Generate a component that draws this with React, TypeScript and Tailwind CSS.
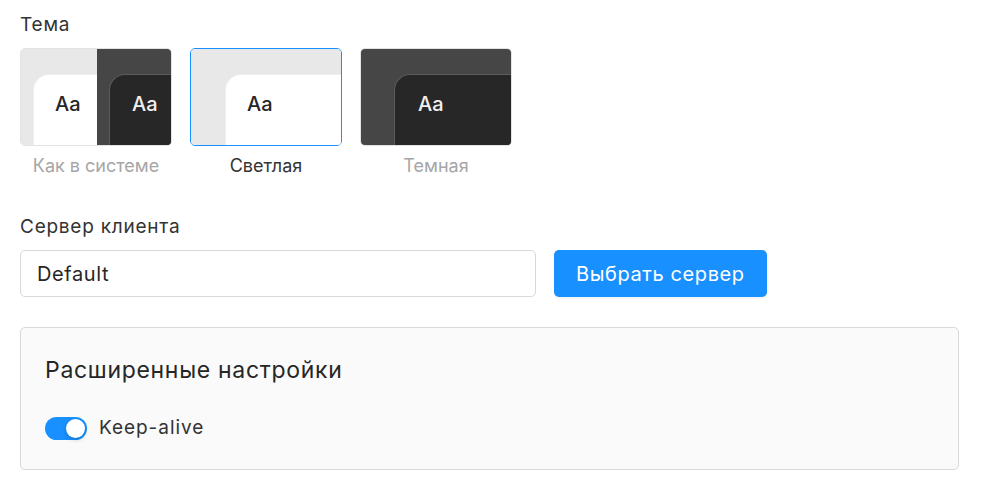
import { useState } from 'react'

type ThemeId = 'system' | 'light' | 'dark'

function LightPreview({ inset }: { inset: string }) {
  return (
    <div className="h-full w-full bg-[#e8e8e8] pt-[25px]">
      <div className={`flex h-full items-start rounded-tl-[16px] border-l border-t border-[#f0f0f0] bg-white pt-[15px] ${inset}`}>
        <span className="text-[20px] leading-[28px] font-medium text-[#262626]">Aa</span>
      </div>
    </div>
  )
}

function DarkPreview({ inset }: { inset: string }) {
  return (
    <div className="h-full w-full bg-[#464646] pt-[25px]">
      <div className={`flex h-full items-start rounded-tl-[16px] border-l border-t border-[#5c5c5c] bg-[#272727] pt-[15px] ${inset}`}>
        <span className="text-[20px] leading-[28px] font-medium text-[#f0f0f0]">Aa</span>
      </div>
    </div>
  )
}

function ThemeCard({ id, label, active, onPick }: { id: ThemeId; label: string; active: boolean; onPick: (id: ThemeId) => void }) {
  return (
    <button type="button" onClick={() => onPick(id)} className="flex w-[152px] flex-col items-center">
      <div
        className={
          active
            ? 'h-[98px] w-full overflow-hidden rounded-[5px] border border-[#1890ff]'
            : 'h-[98px] w-full overflow-hidden rounded-[5px] border border-[#e3e3e3]'
        }
      >
        {id === 'system' ? (
          <div className="flex h-full">
            <div className="w-[76px] shrink-0 overflow-hidden">
              <LightPreview inset="ml-[12px] pl-[21px]" />
            </div>
            <div className="flex-1 overflow-hidden">
              <DarkPreview inset="ml-[12px] pl-[22px]" />
            </div>
          </div>
        ) : id === 'light' ? (
          <LightPreview inset="ml-[34px] pl-[21px]" />
        ) : (
          <DarkPreview inset="ml-[33px] pl-[23px]" />
        )}
      </div>
      <span className={active ? 'mt-[6px] text-[18px] text-[#333]' : 'mt-[6px] text-[18px] text-[#a6a6a6]'}>{label}</span>
    </button>
  )
}

export default function App() {
  const [theme, setTheme] = useState<ThemeId>('light')
  const [keepAlive, setKeepAlive] = useState(true)

  return (
    <div className="min-h-[501px] bg-white px-[20px] pt-[12px] text-[#333] [font-family:Inter,'Noto_Sans',sans-serif]">
      <div className="text-[19px] leading-[26px] tracking-[0.04em]">Тема</div>
      <div className="mt-[10px] flex gap-[18px]">
        <ThemeCard id="system" label="Как в системе" active={theme === 'system'} onPick={setTheme} />
        <ThemeCard id="light" label="Светлая" active={theme === 'light'} onPick={setTheme} />
        <ThemeCard id="dark" label="Темная" active={theme === 'dark'} onPick={setTheme} />
      </div>

      <div className="mt-[35px] text-[19px] leading-[26px] tracking-[0.04em]">Сервер клиента</div>
      <div className="mt-[10px] flex items-center gap-[18px]">
        <div className="flex h-[47px] w-[516px] items-center rounded-[5px] border border-[#d9d9d9] px-[16px] text-[20px] tracking-[0.03em] text-[#262626]">
          Default
        </div>
        <button
          type="button"
          className="h-[47px] rounded-[5px] bg-[#1890ff] px-[22px] text-[20px] tracking-[0.03em] text-white shadow-[0_2px_0_rgba(0,0,0,0.04)]"
        >
          Выбрать сервер
        </button>
      </div>

      <div className="mt-[30px] w-[939px] rounded-[5px] border border-[#d9d9d9] bg-[#fafafa] px-[24px] pb-[26px] pt-[27px]">
        <div className="text-[23px] leading-[30px] tracking-[0.03em] text-[#262626]">Расширенные настройки</div>
        <div className="mt-[29px] flex items-center gap-[12px]">
          <button
            type="button"
            onClick={() => setKeepAlive(!keepAlive)}
            className={
              keepAlive
                ? 'relative h-[23px] w-[42px] rounded-full bg-[#1890ff]'
                : 'relative h-[23px] w-[42px] rounded-full bg-[#bfbfbf]'
            }
          >
            <span
              className={
                keepAlive
                  ? 'absolute right-[2px] top-[2px] h-[19px] w-[19px] rounded-full bg-white shadow-[0_2px_4px_rgba(0,35,11,0.2)]'
                  : 'absolute left-[2px] top-[2px] h-[19px] w-[19px] rounded-full bg-white shadow-[0_2px_4px_rgba(0,35,11,0.2)]'
              }
            />
          </button>
          <span className="text-[19px] tracking-[0.05em] text-[#333]">Keep-alive</span>
        </div>
      </div>
    </div>
  )
}
